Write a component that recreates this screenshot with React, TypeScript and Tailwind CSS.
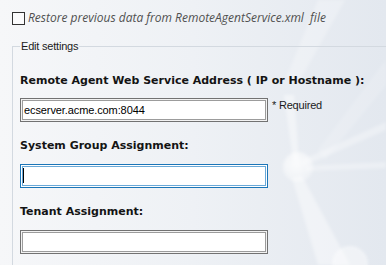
import { useState } from "react";

function Backdrop() {
  // faint "network" artwork behind the form
  return (
    <svg
      className="absolute inset-0 pointer-events-none"
      width="386"
      height="265"
      viewBox="0 0 386 265"
    >
      <defs>
        <radialGradient id="node" cx="0.45" cy="0.4" r="0.6">
          <stop offset="0" stopColor="#ffffff" stopOpacity="0.8" />
          <stop offset="1" stopColor="#ffffff" stopOpacity="0.3" />
        </radialGradient>
        <filter id="soft" x="-20%" y="-20%" width="140%" height="140%">
          <feGaussianBlur stdDeviation="1.5" />
        </filter>
      </defs>
      <g filter="url(#soft)" fill="#ffffff">
        <polygon points="318,0 345,0 300,80 286,78" opacity="0.25" />
        <polygon points="284,95 294,95 299,160 293,160" opacity="0.4" />
        <polygon points="302,160 386,122 386,130 304,166" opacity="0.3" />
        <polygon points="306,166 386,162 386,168 306,171" opacity="0.3" />
        <polygon points="292,178 302,176 350,265 318,265" opacity="0.4" />
        <polygon points="318,150 386,60 386,85 325,160" opacity="0.15" />
      </g>
      <circle cx="298" cy="167" r="15" fill="url(#node)" filter="url(#soft)" />
      <circle cx="350" cy="264" r="18" fill="#ffffff" opacity="0.45" filter="url(#soft)" />
    </svg>
  );
}

export default function App() {
  const [restore, setRestore] = useState(false);
  const [address, setAddress] = useState("ecserver.acme.com:8044");

  const boxed =
    "w-[248px] h-[24px] bg-white border pl-[3px] text-[11px] tracking-[-0.1px] text-black outline-none";
  const heading =
    "font-['DejaVu_Sans',Verdana,sans-serif] font-bold text-[11px] leading-[13px] text-[#141414]";

  return (
    <div className="relative w-[386px] h-[265px] overflow-hidden bg-gradient-to-r from-[#f6f7f9] via-[#eef1f5] to-[#e3e8ef] font-['Liberation_Sans',Arial,sans-serif]">
      <Backdrop />

      <div className="relative pl-3 pt-[11px]">
        <label className="flex items-center gap-[3px] h-[14px] cursor-default">
          <span
            onClick={() => setRestore(!restore)}
            className="w-[13px] h-[13px] border border-[#333333] bg-white/60 flex items-center justify-center text-[10px] leading-none"
          >
            {restore ? "✓" : ""}
          </span>
          <span className="italic text-[12px] text-[#505050] font-['Open_Sans',sans-serif] whitespace-pre">
            Restore previous data from RemoteAgentService.xml  file
          </span>
        </label>

        <fieldset className="mt-[15px] w-[420px] h-[260px] border border-[#d3d9e0] pl-[7px] pt-[21px]">
          <legend className="px-px text-[11px] leading-[13px] text-[#1a1a1a] tracking-[-0.2px]">
            Edit settings
          </legend>

          <div className={heading}>
            Remote Agent Web Service Address ( IP or Hostname ):
          </div>
          <div className="mt-[11px] flex items-start gap-[4px]">
            <input
              value={address}
              onChange={(e) => setAddress(e.target.value)}
              className={`${boxed} border-[#727272] shadow-[inset_0_0_0_1px_#f2f2f2,inset_0_0_0_2px_#9c9c9c]`}
            />
            <span className="text-[11px] leading-[13px] text-[#1a1a1a] tracking-[-0.2px] mt-[1px]">
              * Required
            </span>
          </div>

          <div className={`mt-[17px] ${heading}`}>System Group Assignment:</div>
          <div className="mt-[11px] relative w-[248px]">
            <input
              className={`${boxed} border-[#1c76b8] shadow-[inset_0_0_0_1px_#ffffff,inset_0_0_0_2px_#6aa9d8]`}
            />
            <span className="absolute left-[3px] top-[5px] w-px h-[15px] bg-black" />
          </div>

          <div className={`mt-[17px] ${heading}`}>Tenant Assignment:</div>
          <div className="mt-[11px]">
            <input
              className={`${boxed} border-[#727272] shadow-[inset_0_0_0_1px_#f2f2f2,inset_0_0_0_2px_#9c9c9c]`}
            />
          </div>
        </fieldset>
      </div>
    </div>
  );
}
